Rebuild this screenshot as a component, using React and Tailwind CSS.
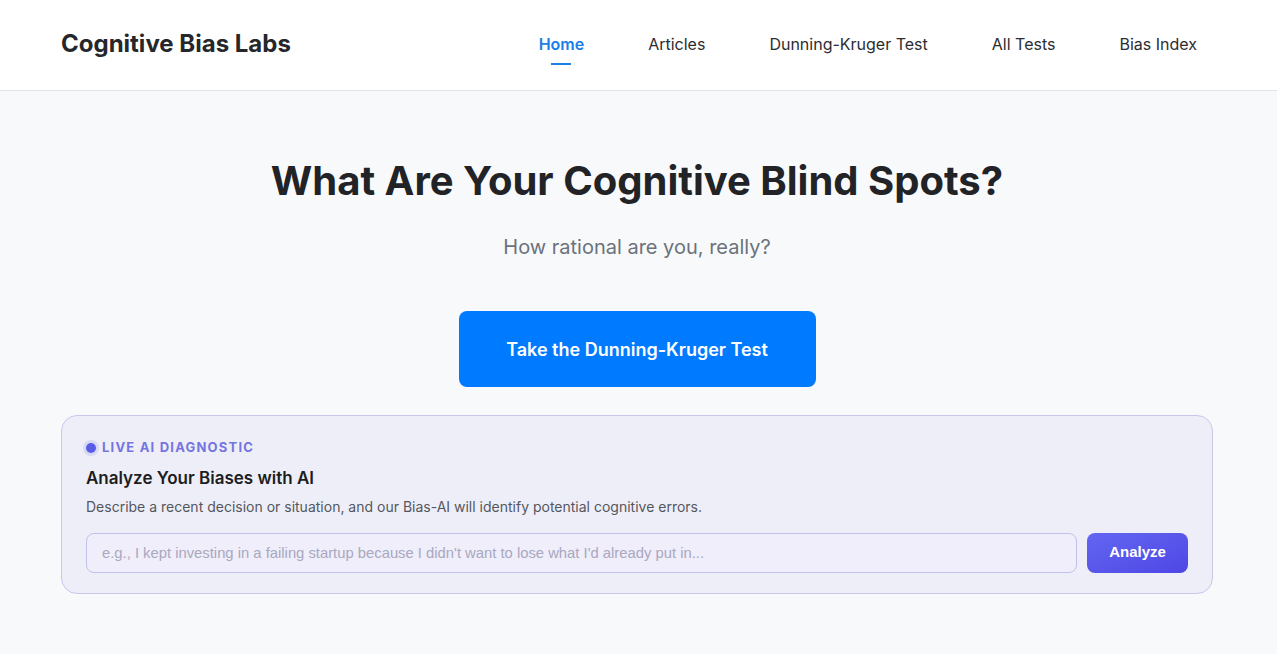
export default function App() {
  const links = ['Home', 'Articles', 'Dunning-Kruger Test', 'All Tests', 'Bias Index'];

  return (
    <div className="min-h-screen bg-[#f8f9fb] font-['Inter',sans-serif] text-[#212529]">
      {/* Header */}
      <header className="h-[91px] bg-white border-b border-[#e3e5e8]">
        <div className="max-w-[1203px] mx-auto pl-6 pr-[27px] h-full flex items-center justify-between pb-[2px]">
          <div className="text-[24px] font-bold text-[#25272b]">Cognitive Bias Labs</div>
          <nav className="flex items-center gap-[64px] pr-[16px]">
            {links.map((l, i) => (
              <a
                key={l}
                href="#"
                className={`relative text-[16px] ${i === 0 ? 'text-[#1a7ee6] font-semibold' : 'text-[#2b2d31]'}`}
              >
                {l}
                {i === 0 && (
                  <span className="absolute left-1/2 -translate-x-1/2 top-[31px] w-[20px] h-[2px] bg-[#1a7ee6]" />
                )}
              </a>
            ))}
          </nav>
        </div>
      </header>

      <main className="max-w-[1203px] mx-auto pl-6 pr-[27px]">
        {/* Hero */}
        <section className="flex flex-col items-center pt-[66px]">
          <h1 className="text-[40px] font-bold text-[#212326] leading-[48px]">
            What Are Your Cognitive Blind Spots?
          </h1>
          <p className="mt-[28px] text-[20px] text-[#6c727a] leading-[28px]">How rational are you, really?</p>
          <button className="mt-[50px] w-[357px] h-[76px] rounded-lg bg-[#007bff] text-white text-[18px] font-semibold">
            Take the Dunning-Kruger Test
          </button>
        </section>

        {/* AI card */}
        <section className="mt-[28px] rounded-2xl border border-[#c9c6ee] bg-[#eeeef9] px-6 pt-[22px] pb-[20px]">
          <div className="flex items-center gap-[6px]">
            <span className="w-[10px] h-[10px] rounded-full bg-[#5b5ce6] ring-[3px] ring-[#d9d9f5]" />
            <span className="text-[13px] font-bold tracking-[1.2px] text-[#7575e0] uppercase">Live AI Diagnostic</span>
          </div>
          <h2 className="mt-[8px] text-[17px] font-semibold text-[#1c1d21] leading-[24px]">Analyze Your Biases with AI</h2>
          <p className="mt-[7px] text-[14px] text-[#54575d] leading-[20px]">
            Describe a recent decision or situation, and our Bias-AI will identify potential cognitive errors.
          </p>
          <div className="mt-[16px] flex gap-[10px]">
            <input
              type="text"
              placeholder="e.g., I kept investing in a failing startup because I didn't want to lose what I'd already put in..."
              className="flex-1 h-[40px] rounded-lg border border-[#c2c0ec] bg-[#efeefa] px-[15px] text-[14.8px] font-['Liberation_Sans',Arial,sans-serif] placeholder:text-[#a9a8bf] outline-none"
            />
            <button className="w-[101px] h-[40px] rounded-lg bg-gradient-to-br from-[#6366f1] to-[#4f46e5] text-white text-[15px] font-bold font-['Liberation_Sans',Arial,sans-serif]">
              Analyze
            </button>
          </div>
        </section>
      </main>
    </div>
  );
}
